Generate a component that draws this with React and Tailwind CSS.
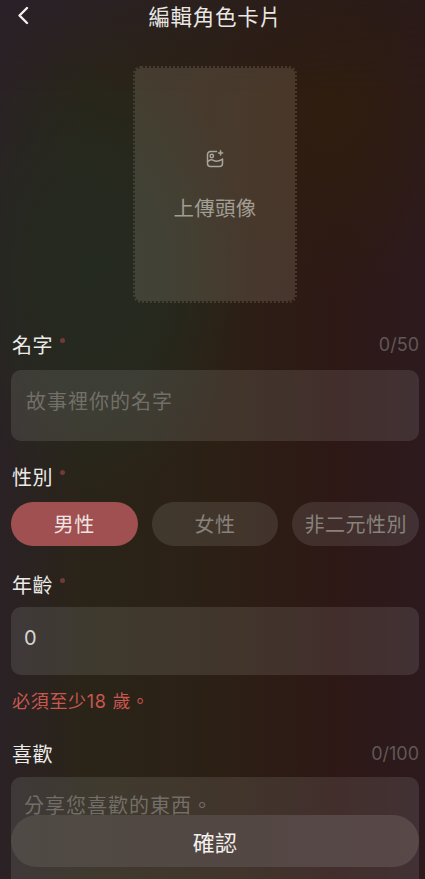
import React from "react";

function Label({ children, required, count, className = "" }) {
  return (
    <div className={`flex items-center justify-between h-[28px] ${className}`}>
      <div className="flex items-start">
        <span className="text-[20px] leading-[28px] tracking-[0.5px] text-[#ecebe7]">{children}</span>
        {required && <span className="ml-[7px] mt-[7px] w-[5px] h-[5px] rounded-full bg-[#713a38]" />}
      </div>
      {count && <span className="text-[18px] leading-[28px] text-[#5f5856] font-['Inter',sans-serif]">{count}</span>}
    </div>
  );
}

function Pill({ children, active }) {
  return (
    <div className={`flex-1 h-[44px] rounded-full flex items-center justify-center text-[20px] tracking-[0.5px] ${active ? "bg-[#a05050] text-[#efe4e1]" : "bg-white/10 text-[#88827c]"}`}>
      {children}
    </div>
  );
}

export default function App() {
  return (
    <div className="relative w-[425px] h-[879px] overflow-hidden bg-[#2a1c1a] bg-[radial-gradient(ellipse_150px_230px_at_95px_270px,#252a20_0%,rgba(37,42,32,0.75)_50%,rgba(37,42,32,0)_100%),radial-gradient(ellipse_130px_190px_at_335px_110px,#2f1e0f_0%,rgba(47,30,15,0)_100%),linear-gradient(90deg,#2a2225_0%,#2a2418_20%,#2c2015_50%,#2d1815_78%,#2d1a1e_100%)] font-['Noto_Sans_CJK_TC','Noto_Sans',sans-serif]">
      <div className="absolute inset-x-0 top-0 h-[90px] bg-[linear-gradient(100deg,rgba(42,32,41,0.95)_0%,rgba(42,32,34,0.6)_45%,rgba(36,26,20,0.3)_100%)] [mask-image:linear-gradient(180deg,black,transparent)]" />

      <div className="relative w-[430px] flex flex-col">
        <header className="relative h-[30px] flex items-start justify-center">
          <svg className="absolute left-[16px] top-[5px]" width="16" height="22" viewBox="0 0 16 22" fill="none" stroke="#f2f0ee" strokeWidth="2.4" strokeLinecap="round" strokeLinejoin="round">
            <path d="M11 3 3.5 10.5 11 18" />
          </svg>
          <h1 className="mt-[3px] text-[21.5px] leading-[26px] tracking-[0.7px] text-[#e9e7e4] font-normal">編輯角色卡片</h1>
        </header>

        <div className="mt-[36px] mx-auto w-[164px] h-[237px] rounded-[8px] bg-[rgba(255,240,210,0.13)] bg-clip-padding border-2 border-dotted border-[rgba(255,240,210,0.13)] flex flex-col items-center">
          <svg className="mt-[81px]" width="20" height="20" viewBox="0 0 20 20" fill="none" stroke="#a8a59d" strokeWidth="1.5" strokeLinecap="round" strokeLinejoin="round">
            <path d="M11.5 2.5H5.5A3 3 0 0 0 2.5 5.5v9a3 3 0 0 0 3 3h9a3 3 0 0 0 3-3V10" />
            <circle cx="6.8" cy="7" r="1.7" />
            <path d="M2.7 12.6c2.2-2.4 4-2.4 5.8-1.2 2 1.3 4.6 1.2 8.9-1" />
            <path d="M15.6 1.2l.75 1.95 1.95.75-1.95.75-.75 1.95-.75-1.95-1.95-.75 1.95-.75z" fill="#a8a59d" strokeWidth="0.6" />
          </svg>
          <span className="mt-[23px] text-[20.5px] leading-[30px] tracking-[0.3px] text-[#a09d94]">上傳頭像</span>
        </div>

        <div className="mt-[28px] px-[11px] flex flex-col">
          <Label required count="0/50" className="pl-[1px]">名字</Label>
          <div className="mt-[11px] h-[71px] rounded-[10px] bg-white/10 pl-[15px] flex items-center pb-[10px]">
            <span className="text-[20px] leading-[28px] tracking-[1px] text-[#726f68]">故事裡你的名字</span>
          </div>

          <Label required className="mt-[22px] pl-[1px]">性別</Label>
          <div className="mt-[11px] flex gap-[14px]">
            <Pill active>男性</Pill>
            <Pill>女性</Pill>
            <Pill>非二元性別</Pill>
          </div>

          <Label required className="mt-[25px] pl-[1px]">年齡</Label>
          <div className="mt-[8px] h-[68px] rounded-[10px] bg-white/10 pl-[13px] flex items-center pb-[6px]">
            <span className="text-[20px] leading-[28px] text-[#d8d6d1] font-['Inter',sans-serif]">0</span>
          </div>

          <p className="mt-[13px] pl-[1px] h-[28px] text-[18px] leading-[28px] tracking-[0.7px] text-[#c9574f] font-['Inter','Noto_Sans_CJK_TC',sans-serif]">必須至少18 歲。</p>

          <Label count="0/100" className="mt-[24px] pl-[1px]">喜歡</Label>
          <div className="mt-[9px] h-[140px] rounded-[10px] bg-white/10 pl-[13px] pt-[14px]">
            <span className="text-[20px] leading-[28px] tracking-[1px] text-[#726e69]">分享您喜歡的東西。</span>
          </div>
        </div>
      </div>

      <button className="absolute left-[11px] top-[815px] w-[408px] h-[52px] rounded-full bg-gradient-to-r from-[#4f4a45] via-[#524743] to-[#584848] text-[22px] tracking-[0.3px] text-[#f3f1ee] flex items-center justify-center">
        確認
      </button>
    </div>
  );
}
